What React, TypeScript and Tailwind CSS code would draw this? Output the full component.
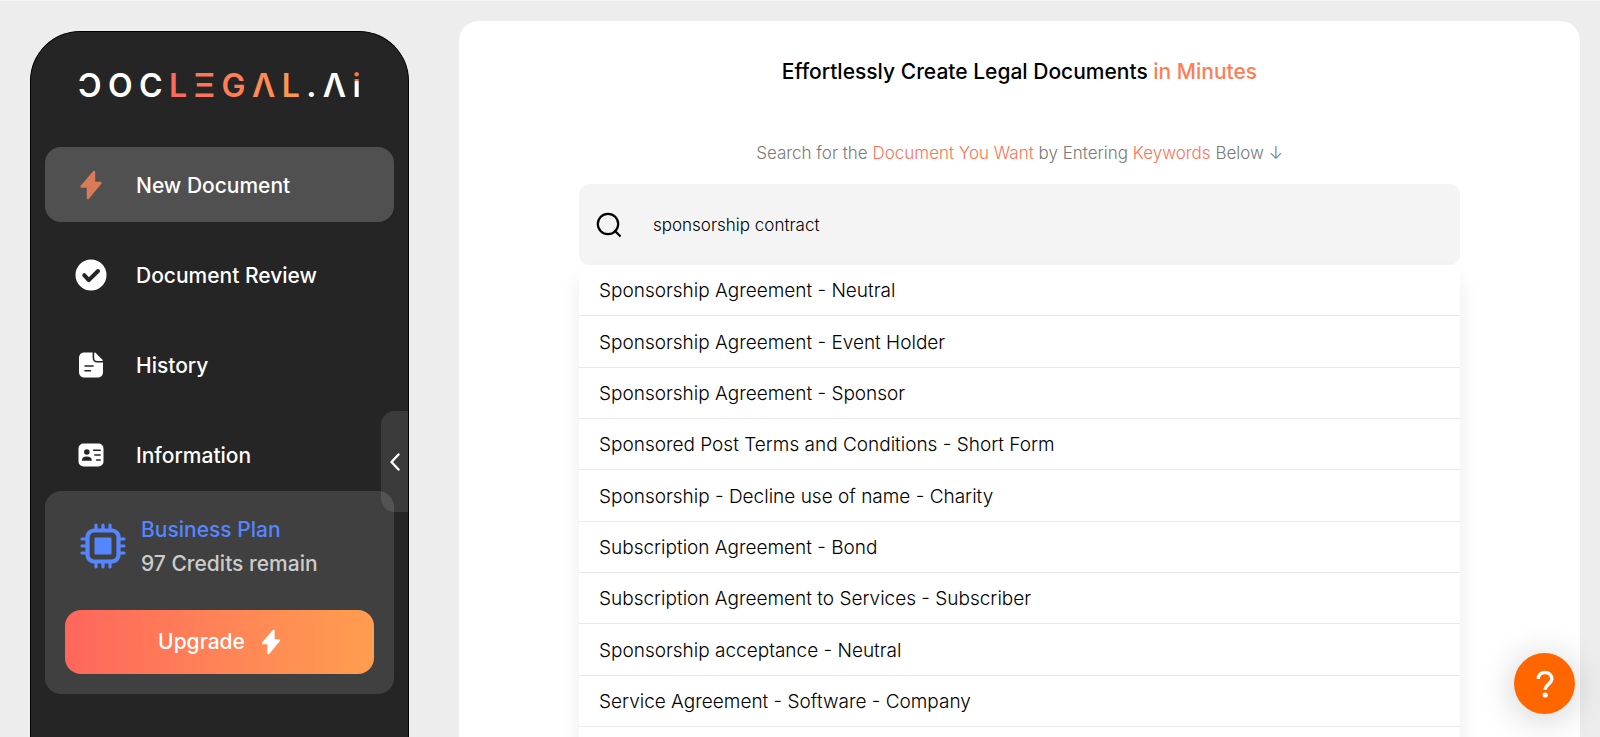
import { useState } from "react";

type IconProps = { className?: string };

function BoltIcon({ className }: IconProps) {
  return (
    <svg viewBox="0 0 22 30" className={className} fill="currentColor" stroke="currentColor" strokeWidth="2.4" strokeLinejoin="round" aria-hidden="true">
      <path d="M14 2v11h6.400L8 28V16.500H1.600L14 2Z" />
    </svg>
  );
}

function CheckCircleIcon({ className }: IconProps) {
  return (
    <svg viewBox="0 0 32 32" className={className} fill="none" aria-hidden="true">
      <circle cx="16" cy="16" r="15.5" fill="#fff" />
      <path d="M9.200 16.200l4.600 5L23 12" stroke="#252525" strokeWidth="4" strokeLinecap="round" strokeLinejoin="round" />
    </svg>
  );
}

function DocumentIcon({ className }: IconProps) {
  return (
    <svg viewBox="0 0 26 26" className={className} fill="none" aria-hidden="true">
      <path d="M6.400.5h8.200v5.300c0 2.900 1.600 4.700 4.600 4.700H25V19.500c0 4-2 6-6 6H7c-4 0-6-2-6-6V6.500C1 2.600 3 .5 6.400.5Z" fill="#fff" />
      <path d="M16.200 1.200c0-.8.8-1 1.300-.5l7 7c.6.600.300 1.300-.5 1.300h-4.600c-2.200 0-3.200-1-3.200-3.200V1.200Z" fill="#fff" />
      <path d="M7 14h8M7 18.700h5.500" stroke="#252525" strokeWidth="1.600" strokeLinecap="round" />
    </svg>
  );
}

function IdCardIcon({ className }: IconProps) {
  return (
    <svg viewBox="0 0 26 24" className={className} fill="none" aria-hidden="true">
      <rect x=".5" y=".5" width="25" height="23" rx="5" fill="#fff" />
      <circle cx="8.800" cy="9" r="2.800" fill="#252525" />
      <path d="M3.800 17.800c0-3 2-4.300 5-4.300s5 1.300 5 4.300H3.800Z" fill="#252525" />
      <path d="M15.600 7.200h6.600M16.800 12h5.400M18.600 17h3.600" stroke="#252525" strokeWidth="1.500" strokeLinecap="round" />
    </svg>
  );
}

function ChipIcon({ className }: IconProps) {
  return (
    <svg viewBox="0 0 46 46" className={className} fill="none" stroke="currentColor" strokeLinecap="round" aria-hidden="true">
      <rect x="7.500" y="7.500" width="31" height="31" rx="6.500" strokeWidth="4.200" />
      <rect x="14.500" y="14.500" width="17" height="17" rx="1" fill="currentColor" stroke="none" />
      <path d="M16 2v4M23 2v4M30 2v4M16 40v4M23 40v4M30 40v4M2 16h4M2 23h4M2 30h4M40 16h4M40 23h4M40 30h4" strokeWidth="3.200" />
    </svg>
  );
}

function SearchIcon({ className }: IconProps) {
  return (
    <svg viewBox="0 0 26 26" className={className} fill="none" stroke="#000" strokeWidth="2.200" aria-hidden="true">
      <circle cx="12" cy="12" r="10.200" />
      <path d="M18.300 18.300l6.200 6.200" />
    </svg>
  );
}

const wordmark = [
  ["Ɔ", "text-white"],
  ["O", "text-white"],
  ["C", "text-white"],
  ["L", "text-[#ff6a5c]"],
  ["Ξ", "text-[#ff7559]"],
  ["G", "text-[#ff7e56]"],
  ["Λ", "text-[#ff8a52]"],
  ["L", "text-[#ff964e]"],
  [".", "text-white"],
  ["Λ", "text-white"],
  ["i", "bg-linear-to-b from-[#ff7043] from-38% to-white to-38% bg-clip-text text-transparent"],
];

const navItems = [
  { label: "New Document", icon: <BoltIcon className="h-[30px] w-[22px] text-[#d97a58]" />, active: true },
  { label: "Document Review", icon: <CheckCircleIcon className="size-8" />, active: false },
  { label: "History", icon: <DocumentIcon className="size-[26px]" />, active: false },
  { label: "Information", icon: <IdCardIcon className="h-6 w-[26px]" />, active: false },
];

const results = [
  "Sponsorship Agreement - Neutral",
  "Sponsorship Agreement - Event Holder",
  "Sponsorship Agreement - Sponsor",
  "Sponsored Post Terms and Conditions - Short Form",
  "Sponsorship - Decline use of name - Charity",
  "Subscription Agreement - Bond",
  "Subscription Agreement to Services - Subscriber",
  "Sponsorship acceptance - Neutral",
  "Service Agreement - Software - Company",
];

function Sidebar() {
  return (
    <aside className="relative mt-[30px] flex w-[379px] shrink-0 flex-col rounded-t-[50px] border border-b-0 border-black bg-[#252525] px-[14px]">
      <a href="#home" aria-label="DOCLEGAL.Ai" className="mx-[33px] mt-[34px] flex h-10 items-center justify-between text-[32px] leading-10 font-semibold">
        {wordmark.map(([glyph, tone], i) => (
          <span key={i} className={tone}>
            {glyph}
          </span>
        ))}
      </a>

      <nav className="mt-[41px] flex flex-col gap-[15px]">
        {navItems.map((item) => (
          <a
            key={item.label}
            href="#nav"
            aria-current={item.active ? "page" : undefined}
            className={`flex h-[75px] items-center gap-[29px] rounded-2xl pl-[30px] text-[21px] font-medium text-white ${item.active ? "bg-[#505050]" : ""}`}
          >
            <span className="flex w-8 justify-center">{item.icon}</span>
            <span className="pt-0.5">{item.label}</span>
          </a>
        ))}
      </nav>

      <section className="-mt-px rounded-2xl bg-[#404040] p-5">
        <div className="flex items-center gap-[15px] pl-[15px]">
          <ChipIcon className="size-[46px] text-[#5686ff]" />
          <div className="pt-0.5 text-[21px] leading-[34px] font-medium">
            <p className="text-[#5686ff]">Business Plan</p>
            <p className="text-[#cccccc]">97 Credits remain</p>
          </div>
        </div>
        <button type="button" className="mt-[29px] flex h-16 w-full items-center justify-center gap-4 rounded-2xl bg-linear-to-r from-[#ff665c] to-[#ff9d4f] text-[21px] font-medium text-white">
          Upgrade
          <BoltIcon className="h-[26px] w-5" />
        </button>
      </section>

      <button type="button" aria-label="Collapse sidebar" className="absolute top-[379px] right-0 flex h-[101px] w-[27px] items-center justify-center rounded-l-[14px] bg-white/10 text-white">
        <svg viewBox="0 0 10 18" className="h-[18px] w-[10px]" fill="none" stroke="currentColor" strokeWidth="2.400" strokeLinecap="round" strokeLinejoin="round" aria-hidden="true">
          <path d="M8.500 1.500L1.500 9l7 7.500" />
        </svg>
      </button>
    </aside>
  );
}

export default function App() {
  const [query, setQuery] = useState("sponsorship contract");

  return (
    <div className="flex h-screen gap-[50px] overflow-hidden border-t border-[#f8f4f0] bg-[#ededed] pr-5 pl-[30px] font-['Inter',sans-serif]">
      <Sidebar />

      <main className="mt-5 min-w-0 flex-1 rounded-t-[20px] bg-white px-[120px] text-center">
        <h1 className="mt-[35px] text-[21px] leading-8 font-medium text-black">
          Effortlessly Create Legal Documents <span className="text-[#ff7d54]">in Minutes</span>
        </h1>
        <p className="mt-[53px] text-[17px] leading-6 font-light text-[#7a7a7a]">
          Search for the <span className="text-[#ff7255]">Document You Want</span> by Entering <span className="text-[#ff7255]">Keywords</span> Below ↓
        </p>

        <div className="mt-[19px] text-left">
          <label className="flex h-[81px] items-center gap-[31px] rounded-[10px] bg-[#f4f4f4] px-[17px]">
            <SearchIcon className="size-[26px] shrink-0" />
            <input
              type="text"
              aria-label="Search documents"
              value={query}
              onChange={(e) => setQuery(e.target.value)}
              className="min-w-0 flex-1 bg-transparent pt-0.5 text-[17px] font-light text-black outline-none"
            />
          </label>
          <div className="h-screen bg-white shadow-[0_14px_20px_rgba(0,0,0,0.08)]">
            <ul className="grid h-[462px] auto-rows-fr">
              {results.map((name) => (
                <li key={name} className="border-b border-[#e9e9e9]">
                  <a href="#document" className="flex h-full items-center px-5 pt-[3px] text-[19px] font-light text-black">
                    {name}
                  </a>
                </li>
              ))}
            </ul>
          </div>
        </div>
      </main>

      <button type="button" aria-label="Help" className="fixed right-[25px] bottom-[23px] flex size-[61px] items-center justify-center rounded-full bg-[#ff6600] shadow-[0_4px_36px_rgba(0,0,0,0.2)]">
        <svg viewBox="0 0 18 28" className="h-7 w-[18px]" fill="none" aria-hidden="true">
          <path d="M2.200 9C2.200 4.800 5 2.500 9 2.500s6.800 2.500 6.800 6.200c0 5-6.400 5.600-6.600 11" stroke="#fff" strokeWidth="3.400" />
          <circle cx="9.200" cy="25" r="2.600" fill="#fff" />
        </svg>
      </button>
    </div>
  );
}
